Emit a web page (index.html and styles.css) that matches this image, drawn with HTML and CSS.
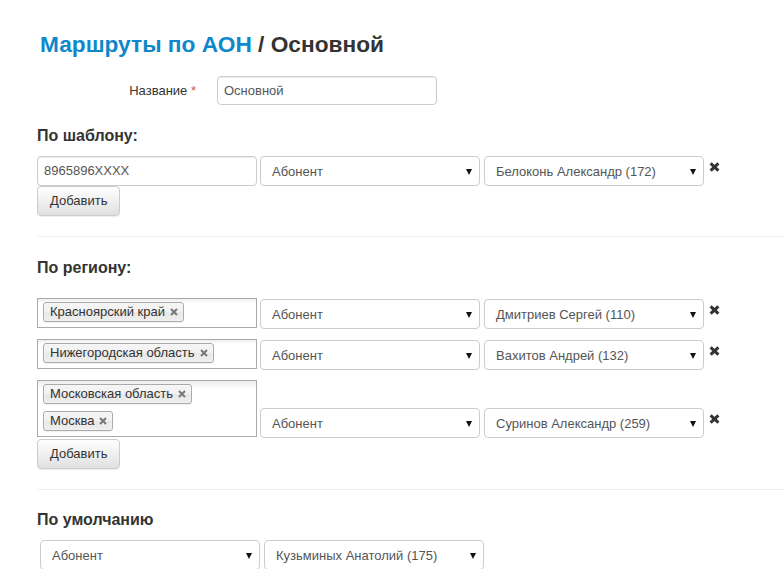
FILE: index.html
```html
<!DOCTYPE html>
<html lang="ru">
<head>
<meta charset="utf-8">
<link rel="stylesheet" href="styles.css">
</head>
<body>
<div class="page">
  <h1 class="title"><span class="crumb">Маршруты по АОН</span> / Основной</h1>

  <div class="field">
    <label class="field-label">Название <span class="req">*</span></label>
    <div class="input name-input">Основной</div>
  </div>

  <h4 class="section section-first">По шаблону:</h4>
  <div class="row">
    <div class="input wide">8965896XXXX</div>
    <div class="select">Абонент<span class="caret"></span></div>
    <div class="select">Белоконь Александр (172)<span class="caret"></span></div>
    <div class="remove"><svg viewBox="0 0 11 10" width="11" height="10"><path d="M1.6 1.3 L9.4 8.7 M9.4 1.3 L1.6 8.7" stroke="#333" stroke-width="3"/></svg></div>
  </div>
  <button class="btn">Добавить</button>

  <hr class="divider">

  <h4 class="section section-region">По региону:</h4>
  <div class="row region-row">
    <div class="tagbox">
      <span class="tag">Красноярский край<svg class="tag-x" viewBox="0 0 8 8" width="8" height="8"><path d="M1 1 L7 7 M7 1 L1 7" stroke="#777" stroke-width="2"/></svg></span>
    </div>
    <div class="select">Абонент<span class="caret"></span></div>
    <div class="select">Дмитриев Сергей (110)<span class="caret"></span></div>
    <div class="remove"><svg viewBox="0 0 11 10" width="11" height="10"><path d="M1.6 1.3 L9.4 8.7 M9.4 1.3 L1.6 8.7" stroke="#333" stroke-width="3"/></svg></div>
  </div>
  <div class="row region-row">
    <div class="tagbox">
      <span class="tag">Нижегородская область<svg class="tag-x" viewBox="0 0 8 8" width="8" height="8"><path d="M1 1 L7 7 M7 1 L1 7" stroke="#777" stroke-width="2"/></svg></span>
    </div>
    <div class="select">Абонент<span class="caret"></span></div>
    <div class="select">Вахитов Андрей (132)<span class="caret"></span></div>
    <div class="remove"><svg viewBox="0 0 11 10" width="11" height="10"><path d="M1.6 1.3 L9.4 8.7 M9.4 1.3 L1.6 8.7" stroke="#333" stroke-width="3"/></svg></div>
  </div>
  <div class="row region-row last">
    <div class="tagbox">
      <span class="tag">Московская область<svg class="tag-x" viewBox="0 0 8 8" width="8" height="8"><path d="M1 1 L7 7 M7 1 L1 7" stroke="#777" stroke-width="2"/></svg></span>
      <span class="tag">Москва<svg class="tag-x" viewBox="0 0 8 8" width="8" height="8"><path d="M1 1 L7 7 M7 1 L1 7" stroke="#777" stroke-width="2"/></svg></span>
    </div>
    <div class="select">Абонент<span class="caret"></span></div>
    <div class="select">Суринов Александр (259)<span class="caret"></span></div>
    <div class="remove"><svg viewBox="0 0 11 10" width="11" height="10"><path d="M1.6 1.3 L9.4 8.7 M9.4 1.3 L1.6 8.7" stroke="#333" stroke-width="3"/></svg></div>
  </div>
  <button class="btn btn-region">Добавить</button>

  <hr class="divider">

  <h4 class="section section-default">По умолчанию</h4>
  <div class="row default-row">
    <div class="select narrow">Абонент<span class="caret"></span></div>
    <div class="select">Кузьминых Анатолий (175)<span class="caret"></span></div>
  </div>
</div>
</body>
</html>
```

FILE: styles.css
```css
* { box-sizing: border-box; }
html, body { margin: 0; padding: 0; background: #fff; }
body {
  font-family: "Liberation Sans", Arial, sans-serif;
  font-size: 13px;
  color: #333;
  overflow: hidden;
}
.page {
  padding-left: 37px;
  height: 569px;
  overflow: hidden;
}
.title {
  margin: 31px 0 0 3px;
  font-size: 22.7px;
  line-height: 26px;
  font-weight: bold;
  color: #333;
}
.crumb { color: #0e88cb; }

.field {
  display: flex;
  align-items: center;
  margin-top: 19px;
}
.field-label {
  width: 159px;
  text-align: right;
  margin-right: 21px;
  color: #333;
}
.req { color: #d9534f; }

.input {
  height: 30px;
  border: 1px solid #ccc;
  border-radius: 4px;
  box-shadow: inset 0 1px 1px rgba(0,0,0,0.075);
  padding: 0 6px;
  line-height: 28px;
  color: #555;
  background: #fff;
  white-space: nowrap;
}
.name-input { width: 220px; height: 29px; line-height: 27px; }
.wide { width: 220px; }

.section {
  margin: 0;
  font-size: 16px;
  line-height: 20px;
  font-weight: bold;
  color: #333;
}
.section-first { margin-top: 21px; margin-bottom: 10px; }
.section-region { margin-top: 21px; margin-bottom: 20px; }
.section-default { margin-top: 20px; margin-bottom: 10px; }

.row {
  display: flex;
  align-items: flex-end;
}
.row > .select { margin-left: 3px; }
.row > .select + .select { margin-left: 4px; }
.region-row { margin-bottom: 10px; }
.region-row.last { margin-bottom: 1px; }
.region-row .tagbox { margin-bottom: 1px; }

.select {
  position: relative;
  width: 220px;
  height: 30px;
  border: 1px solid #ccc;
  border-radius: 4px;
  padding: 0 20px 0 11px;
  line-height: 29px;
  color: #555;
  background: #fff;
  white-space: nowrap;
}
.caret {
  position: absolute;
  right: 7px;
  top: 12px;
  width: 0;
  height: 0;
  border-left: 3px solid transparent;
  border-right: 3px solid transparent;
  border-top: 6px solid #111;
}
.default-row > .select.narrow { margin-left: 3px; width: 220px; }
.default-row > .select + .select { margin-left: 4px; }

.remove {
  padding: 6px 0 0 5px;
  height: 30px;
  display: flex;
  align-items: flex-start;
}
.remove svg { display: block; }

.tagbox {
  width: 220px;
  border: 1px solid #aaa;
  background: #fff linear-gradient(to bottom, #eee 0%, #fff 15%);
  padding: 3px 4px 5px 5px;
  display: flex;
  flex-wrap: wrap;
  row-gap: 7px;
  column-gap: 5px;
}
.tag {
  display: inline-flex;
  align-items: center;
  height: 20px;
  padding: 0 5px 0 6px;
  border: 1px solid #aaa;
  border-radius: 3px;
  background: linear-gradient(to bottom, #f4f4f4 20%, #f0f0f0 50%, #e8e8e8 52%, #eee 100%);
  box-shadow: 0 0 2px #fff inset, 0 1px 0 rgba(0,0,0,0.05);
  color: #333;
  font-size: 13px;
  line-height: 18px;
  white-space: nowrap;
}
.tag-x {
  display: block;
  margin-left: 5px;
}

.btn {
  display: block;
  margin: 0;
  height: 30px;
  padding: 0 12px;
  border: 1px solid #ccc;
  border-radius: 4px;
  background: linear-gradient(to bottom, #fff 0%, #e0e0e0 100%);
  box-shadow: inset 0 1px 0 rgba(255,255,255,0.15), 0 1px 1px rgba(0,0,0,0.075);
  font-family: "Liberation Sans", Arial, sans-serif;
  font-size: 13px;
  color: #333;
  line-height: 28px;
}

.divider {
  margin: 20px 0 0 0;
  border: 0;
  border-top: 1px solid #eee;
  height: 0;
}
```
